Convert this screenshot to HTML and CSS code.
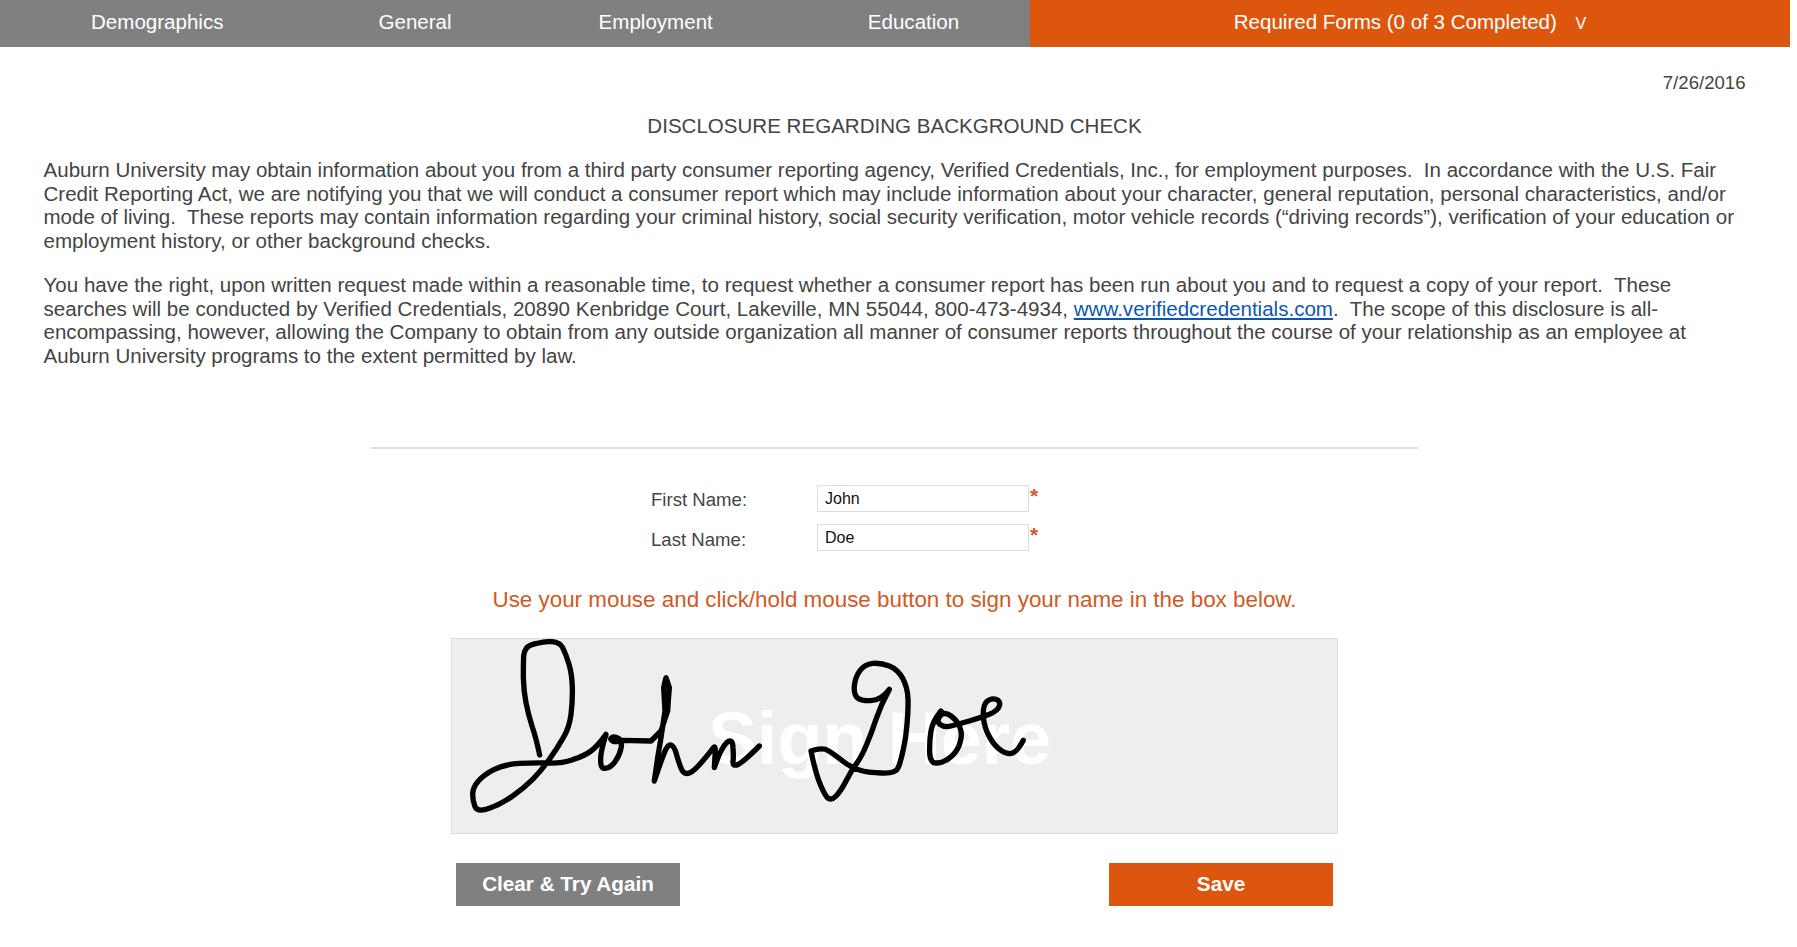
FILE: index.html
```html
<!DOCTYPE html>
<html lang="en">
<head>
  <meta charset="UTF-8">
  <title>Disclosure Regarding Background Check</title>
  <link rel="stylesheet" href="styles.css">
</head>
<body>
  <div class="page">
    <div class="nav">
      <div class="nav-main">
        <a href="#" class="demo">Demographics</a>
        <a href="#" class="gen">General</a>
        <a href="#" class="emp">Employment</a>
        <a href="#" class="edu">Education</a>
      </div>
      <a href="#" class="nav-forms">Required Forms (0 of 3 Completed) <span class="caret">V</span></a>
    </div>

    <div class="content">
      <div class="date">7/26/2016</div>
      <h1>DISCLOSURE REGARDING BACKGROUND CHECK</h1>
      <p>Auburn University may obtain information about you from a third party consumer reporting agency, Verified Credentials, Inc., for employment purposes.&nbsp; In accordance with the U.S. Fair<br>Credit Reporting Act, we are notifying you that we will conduct a consumer report which may include information about your character, general reputation, personal characteristics, and/or<br>mode of living.&nbsp; These reports may contain information regarding your criminal history, social security verification, motor vehicle records (“driving records”), verification of your education or<br>employment history, or other background checks.</p>
      <p>You have the right, upon written request made within a reasonable time, to request whether a consumer report has been run about you and to request a copy of your report.&nbsp; These<br>searches will be conducted by Verified Credentials, 20890 Kenbridge Court, Lakeville, MN 55044, 800-473-4934, <a href="#">www.verifiedcredentials.com</a>.&nbsp; The scope of this disclosure is all-<br>encompassing, however, allowing the Company to obtain from any outside organization all manner of consumer reports throughout the course of your relationship as an employee at<br>Auburn University programs to the extent permitted by law.</p>
    </div>

    <hr>

    <div class="form">
      <div class="row">
        <label for="first">First Name:</label>
        <input id="first" type="text" value="John"><span class="req">*</span>
      </div>
      <div class="row">
        <label for="last">Last Name:</label>
        <input id="last" type="text" value="Doe"><span class="req">*</span>
      </div>
    </div>

    <div class="hint">Use your mouse and click/hold mouse button to sign your name in the box below.</div>

    <div class="sign-box">
      <span class="sign-here">Sign Here</span>
      <svg class="sign" width="885" height="194" viewBox="0 0 885 194">
        <g transform="translate(-11 -8) scale(.33333)">
          <path d="M296 372Q285 320 273 285Q262 250 255 215Q248 180 247 140Q247 100 248 75Q250 50 270 42Q290 35 322 32Q355 30 365 50Q375 70 384 100Q393 130 394 170Q395 210 390 250Q385 290 367 320Q350 350 325 385Q300 420 275 445Q250 470 215 495Q180 520 145 532Q110 545 102 527Q95 510 95 490Q95 470 112 450Q130 430 160 415Q190 400 235 397Q280 395 320 396Q360 398 395 386Q430 375 450 360Q470 345 495 310Q484 345 480 370Q475 415 492 412Q510 410 522 392Q535 375 540 352Q545 330 532 322Q520 315 512 320Q505 325 515 330Q525 335 545 328L630 330Q645 315 660 300Q670 270 680 240Q682 205 685 170Q680 155 675 140Q671 155 668 170Q670 205 672 240Q666 280 660 320Q655 350 650 380L640 450Q660 390 670 365Q680 340 690 342Q700 345 707 372Q715 400 722 416Q730 432 745 426Q760 420 785 390Q810 360 817 350Q825 340 822 375L820 410Q840 350 857 335Q875 320 876 350Q878 380 876 392Q875 405 887 402Q900 400 955 345"/>
        </g>
        <g transform="translate(329 -8) scale(.33333)">
          <path d="M90 360Q125 348 142 359Q160 370 185 390Q210 410 235 417Q260 425 302 426Q345 428 352 409Q360 390 367 355Q375 320 378 280Q382 240 381 205Q380 170 365 142Q350 115 325 105Q300 95 275 97Q250 100 236 120Q222 140 220 165Q218 190 229 200Q240 210 270 209Q300 208 325 175Q300 220 285 265Q270 310 255 345Q240 380 225 400Q210 420 195 450Q180 480 164 496Q148 512 136 496Q125 480 112 445Q100 410 90 360"/>
          <path d="M480 240Q455 270 450 300Q445 330 446 364Q447 398 468 396Q490 395 510 377Q530 360 537 335Q545 310 537 290Q530 270 510 255Q490 240 477 255Q465 270 477 280Q490 290 510 285Q530 280 565 270Q600 260 625 250Q650 240 655 225Q660 210 645 205Q630 200 617 212Q605 225 607 257Q610 290 625 317Q640 345 660 358Q680 372 695 366Q710 360 727 328"/>
        </g>
      </svg>
    </div>

    <div class="buttons">
      <button class="btn btn-clear">Clear &amp; Try Again</button>
      <button class="btn btn-save">Save</button>
    </div>
  </div>
</body>
</html>
```

FILE: styles.css
```css
* {
  margin: 0;
  padding: 0;
  box-sizing: border-box;
}
body {
  background-color: #fff;
  font-family: "Liberation Sans", Arial, sans-serif;
  font-size: 20.55px;
  line-height: 23.5px;
  color: #444;
}
.page {
  width: 1790px;
}
.nav {
  display: flex;
  height: 47px;
  line-height: 44px;
}
.nav a {
  color: #fff;
  text-decoration: none;
}
.nav-main {
  display: flex;
  width: 1030px;
  background-color: #808080;
}
.demo {
  margin-left: 91px;
}
.gen {
  margin-left: 155px;
}
.emp {
  margin-left: 147px;
}
.edu {
  margin-left: 155px;
}
.nav-forms {
  flex: 1;
  text-align: center;
  background-color: #dc570d;
}
.caret {
  font-size: 16px;
  margin-left: 13px;
}
.content {
  padding: 0 44.5px 0 43.5px;
}
.date {
  text-align: right;
  margin-top: 24px;
  font-size: 18.6px;
}
h1 {
  font-size: 20.55px;
  font-weight: normal;
  text-align: center;
  margin: 19px 0 21px;
}
.content p {
  margin-bottom: 21px;
}
.content a {
  color: #0b57b5;
}
hr {
  width: 1048px;
  margin: 80px 0 36px 370px;
  border: 0;
  border-top: 2px solid #e0e0e0;
}
.form {
  margin-left: 651px;
}
.row {
  display: flex;
  height: 39px;
  font-size: 18.6px;
}
.row label {
  width: 166px;
  padding-top: 3px;
}
.row + .row label {
  padding-top: 4px;
}
.row input {
  width: 212px;
  height: 27px;
  padding: 2px 7px;
  border: 1px solid #ddd;
  font-family: "Liberation Sans", Arial, sans-serif;
  font-size: 16px;
  color: #111;
  outline: none;
}
.req {
  color: #d9572a;
  margin-left: 1px;
  line-height: 21px;
  font-size: 21px;
  font-weight: bold;
}
.hint {
  margin-top: 25px;
  text-align: center;
  width: 1789px;
  color: #cf5a25;
  font-size: 22.4px;
}
.sign-box {
  position: relative;
  width: 887px;
  height: 196px;
  margin: 26px 0 0 451px;
  background-color: #eee;
  border: 1px solid #ddd;
  overflow: hidden;
}
.sign-here {
  position: absolute;
  left: 256px;
  top: 60px;
  font-size: 73.5px;
  font-weight: bold;
  line-height: 80px;
  color: #fff;
  white-space: nowrap;
}
.sign {
  position: absolute;
  left: 0;
  top: 0;
  fill: none;
  stroke: #000;
  stroke-width: 16;
  stroke-linecap: round;
  stroke-linejoin: round;
}
.buttons {
  display: flex;
  justify-content: space-between;
  width: 877px;
  margin: 29px 0 0 456px;
}
.btn {
  width: 224px;
  height: 43px;
  border: 0;
  color: #fff;
  font-family: "Liberation Sans", Arial, sans-serif;
  font-size: 20.7px;
  font-weight: bold;
}
.btn-clear {
  background-color: #808080;
}
.btn-save {
  background-color: #dc570d;
}
```
